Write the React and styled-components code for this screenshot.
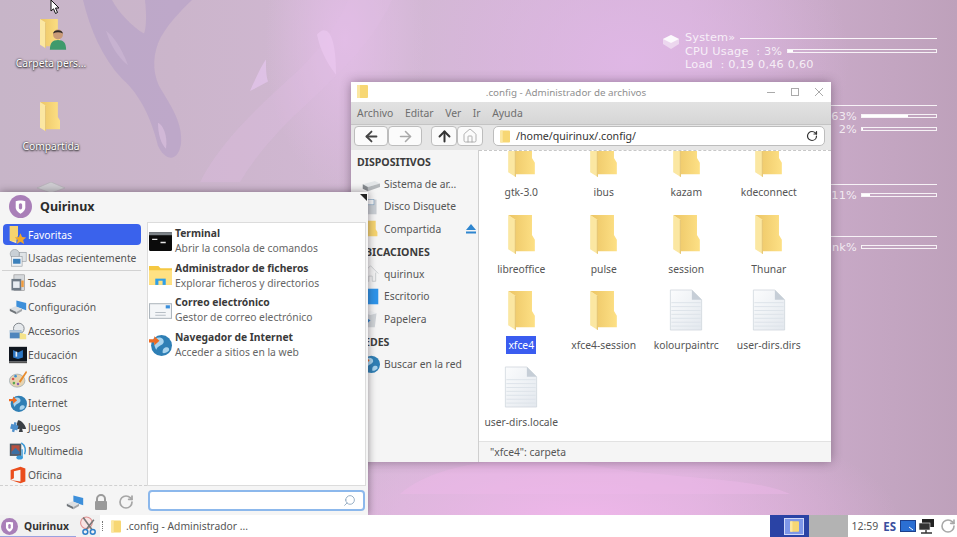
import * as React from "react";
import styled, { createGlobalStyle } from "styled-components";
import { ArrowLeft, ArrowRight, ArrowUp, Home, RotateCw, Search } from "lucide-react";

const GlobalStyle = createGlobalStyle`
  html, body { margin: 0; padding: 0; height: 100%; overflow: hidden; }
  body { font-family: "Noto Sans", "Open Sans", sans-serif; }
  * { box-sizing: border-box; }
  svg { flex: none; }
`;

const categories = [
  { name: "Todas", icon: "all" },
  { name: "Configuración", icon: "settings" },
  { name: "Accesorios", icon: "tools" },
  { name: "Educación", icon: "edu" },
  { name: "Gráficos", icon: "paint" },
  { name: "Internet", icon: "globe" },
  { name: "Juegos", icon: "games" },
  { name: "Multimedia", icon: "media" },
  { name: "Oficina", icon: "office" },
];

const favourites = [
  { title: "Terminal", sub: "Abrir la consola de comandos", icon: "term" },
  { title: "Administrador de ficheros", sub: "Explorar ficheros y directorios", icon: "files" },
  { title: "Correo electrónico", sub: "Gestor de correo electrónico", icon: "mail" },
  { title: "Navegador de Internet", sub: "Acceder a sitios en la web", icon: "globe" },
];

const files = [
  { name: "gtk-3.0" }, { name: "ibus" }, { name: "kazam" }, { name: "kdeconnect" },
  { name: "libreoffice" }, { name: "pulse" }, { name: "session" }, { name: "Thunar" },
  { name: "xfce4", selected: true }, { name: "xfce4-session" },
  { name: "kolourpaintrc", doc: true }, { name: "user-dirs.dirs", doc: true },
  { name: "user-dirs.locale", doc: true },
];

const places = [
  { head: "DISPOSITIVOS" },
  { name: "Sistema de ar...", icon: "drive" },
  { name: "Disco Disquete", icon: "floppy" },
  { name: "Compartida", icon: "folder", eject: true },
  { head: "UBICACIONES" },
  { name: "quirinux", icon: "home" },
  { name: "Escritorio", icon: "desk" },
  { name: "Papelera", icon: "trash" },
  { head: "REDES" },
  { name: "Buscar en la red", icon: "globe" },
];

function FolderIcon({ w = 27, h = 40 }) {
  return (
    <svg width={w} height={h} viewBox="0 0 28 42">
      <path d="M0 0H25V21L28 26V38H8V6Z" fill="url(#folderBack)" />
      <path d="M0 0L8 5V41L0 36Z" fill="#fbe7a2" />
      <path d="M8 5V41L7 40.4V5Z" fill="#e2bf68" />
    </svg>
  );
}

function FlatFolder({ w = 11, h = 13 }) {
  return (
    <svg width={w} height={h} viewBox="0 0 11 13">
      <path d="M0 1A1 1 0 0 1 1 0H10A1 1 0 0 1 11 1V12A1 1 0 0 1 10 13H1A1 1 0 0 1 0 12Z" fill="#f7d774" />
      <path d="M0 1A1 1 0 0 1 1 0H3V13H1A1 1 0 0 1 0 12Z" fill="#fbe7a2" />
    </svg>
  );
}

function DocIcon() {
  return (
    <svg width="34" height="42" viewBox="0 0 34 43">
      <path d="M1 1H23L33 11V42H1Z" fill="url(#docFill)" stroke="#cfd6dd" strokeWidth=".8" />
      {[14, 18, 22, 26, 30, 34, 38].map((y) => (
        <path key={y} d="M2 0H32" transform={`translate(0 ${y})`} stroke="#dde3ea" strokeWidth="1" />
      ))}
      <path d="M23 1V11H33Z" fill="#c6ced7" />
    </svg>
  );
}

function LogoMark({ size = 23 }) {
  return (
    <svg width={size} height={size} viewBox="0 0 24 24">
      <circle cx="12" cy="12" r="12" fill="#a97fb8" />
      <path d="M7 6.5C9 5.5 15 5.5 17 6.5V13C17 16 14 18.5 12 19.5C10 18.5 7 16 7 13Z" fill="#fff" />
      <rect x="10.3" y="8.5" width="3.4" height="6.5" rx="1.7" fill="#a97fb8" />
    </svg>
  );
}

// small app icons, all drawn on a 22 unit square
function AppIcon({ name, size = 20 }) {
  const shapes = {
    term: (
      <>
        <rect x="0" y="2" width="22" height="18" rx="1" fill="#0b0b0b" />
        <rect x="0" y="2" width="22" height="3" fill="#7d8388" />
        <path d="M3 9H8M11 12H16" stroke="#e8e8e8" strokeWidth="1.3" />
      </>
    ),
    files: (
      <>
        <path d="M0 2H9L11 4H22V20H0Z" fill="#f5c842" />
        <rect x="0" y="6" width="22" height="14" fill="#ffe183" />
        <path d="M6 14H16V20H6Z" fill="#2f9fe8" />
        <path d="M9 16H13V20H9Z" fill="#ffe183" />
      </>
    ),
    mail: (
      <>
        <rect x="0.5" y="4.5" width="21" height="14" fill="#f4f6f8" stroke="#aeb6bd" />
        <rect x="16" y="6" width="4" height="3" fill="#3a8fdc" />
        <path d="M6 13H16M6 15.5H16" stroke="#b7bec5" />
      </>
    ),
    globe: (
      <>
        <circle cx="12" cy="12" r="10" fill="#2f7fb5" />
        <path d="M6 5C10 3 15 5 14 9C13 12 8 12 7 16C5 13 4 8 6 5ZM15 14C18 13 20 14 19 17C17 19 14 20 13 19C13 17 13 15 15 14Z" fill="#a9d4ee" />
        <path d="M0 6H5V3L10 7.500L5 12V9H0Z" fill="#ee6b22" />
      </>
    ),
    all: (
      <>
        <rect x="6" y="1" width="13" height="19" fill="#d6d9dc" stroke="#888" strokeWidth=".7" />
        <rect x="3" y="6" width="12" height="14" fill="#6e7a86" />
        <rect x="5" y="9" width="8" height="8" fill="#e8edf2" />
        <rect x="15" y="8" width="3" height="8" fill="#ef9b3d" />
      </>
    ),
    settings: (
      <>
        <path d="M9 3L21 6V15L9 11Z" fill="#3d8fda" />
        <path d="M1 13L8 10L16 13L9 17Z" fill="#dcdfe2" />
        <path d="M1 13L9 17V20L1 16Z" fill="#6f7479" />
        <path d="M9 17L16 13V16L9 20Z" fill="#a2a6aa" />
      </>
    ),
    tools: (
      <>
        <circle cx="12" cy="8" r="6.500" fill="#e6e9ec" stroke="#80868c" strokeWidth="1.200" />
        <rect x="1" y="10" width="14" height="10" fill="#4f86bd" />
        <rect x="1" y="10" width="14" height="3" fill="#b5c7d8" />
        <path d="M13 13L21 15V21H13Z" fill="#f5e38a" />
      </>
    ),
    edu: (
      <>
        <rect x="0" y="1" width="22" height="18" fill="#10161f" />
        <path d="M5 5L11 8L17 5V14L11 16L5 14Z" fill="#2e77c4" />
        <path d="M8 7H10V13H8Z" fill="#e9eef4" />
        <rect x="0" y="19" width="22" height="2" fill="#555" />
      </>
    ),
    paint: (
      <>
        <ellipse cx="10" cy="13" rx="9.500" ry="8" fill="#e6d3b0" stroke="#93a4b0" strokeWidth=".8" />
        <circle cx="5" cy="11" r="1.600" fill="#d9534f" />
        <circle cx="8" cy="7.500" r="1.600" fill="#3f8fd2" />
        <circle cx="6" cy="16" r="1.600" fill="#5ba74e" />
        <circle cx="11" cy="17" r="1.500" fill="#8b5fb0" />
        <path d="M21 1L12 14L14 15.500L22 3Z" fill="#e88a2b" />
      </>
    ),
    games: (
      <>
        <path d="M11 3C14 2 19 7 21 13C18 14 17 13 16 13L17 17H12L13 13C12 13 10 14 9 13C9 10 10 5 11 3Z" fill="#3a3f45" />
        <path d="M2 8H5V5H8V8H11V14H8V17H5V14H2Z" fill="#4e8fcb" transform="rotate(15 6 11)" />
      </>
    ),
    media: (
      <>
        <rect x="1" y="2" width="14" height="15" fill="#4a5964" />
        <rect x="3" y="4" width="10" height="11" fill="#b6503f" />
        <path d="M3 12L8 7L13 12V15H3Z" fill="#3c6fa2" />
        <path d="M15 1C20 4 21 10 19 15" fill="none" stroke="#3a9ad9" strokeWidth="1.800" />
        <ellipse cx="13" cy="19" rx="4" ry="2.500" fill="#3a9ad9" />
        <path d="M16 19V9" stroke="#3a9ad9" strokeWidth="1.600" />
      </>
    ),
    office: <path d="M2 5L14 1L20 3V19L14 21L2 17L14 19V4.500L6 6.500V15L2 17Z" fill="#ea4d1c" />,
    usage: (
      <>
        <circle cx="7" cy="6" r="5.500" fill="#c9d0d6" stroke="#8c9399" strokeWidth=".7" />
        <rect x="13" y="4" width="8" height="11" fill="#dfe3e6" stroke="#8c9399" strokeWidth=".7" />
        <rect x="3" y="9" width="13" height="12" fill="#eef1f4" stroke="#8c9399" strokeWidth=".7" />
        <rect x="5" y="12" width="9" height="6" fill="#3b80bb" />
      </>
    ),
    star: (
      <>
        <path d="M1 0L9 3V21L1 18Z" fill="#ffe9a8" />
        <path d="M1 0H11V12L8 19L1 18Z" fill="#f6d36f" />
        <path d="M14 9L16 13.500L21 14L17.300 17L18.500 22L14 19.400L9.500 22L10.700 17L7 14L12 13.500Z" fill="#f0a72a" />
      </>
    ),
    drive: (
      <>
        <path d="M2 12L16 8L22 11L8 15Z" fill="#e3e6e8" />
        <path d="M2 12L8 15V20L2 17Z" fill="#858a8e" />
        <path d="M8 15L22 11V15L8 20Z" fill="#b4b8bb" />
      </>
    ),
    floppy: (
      <>
        <rect x="2" y="3" width="16" height="17" fill="#c8cdd2" />
        <rect x="5" y="3" width="10" height="6" fill="#f2f4f6" stroke="#7da0bf" strokeWidth=".7" />
      </>
    ),
    folder: <path d="M4 2H17V12L19 15V20H8V5Z" fill="#f5d36f" />,
    home: <path d="M2 11L11 2L20 11M5 10V20H9V14H13V20H17V10" fill="#f2f2f2" stroke="#c5c8cb" strokeWidth="1" />,
    desk: <rect x="2" y="2" width="18" height="18" fill="#2d93e8" />,
    trash: (
      <>
        <path d="M4 5H18L16 21H6Z" fill="#cfd3d7" />
        <path d="M4 5L11 2L18 5L11 7Z" fill="#eef0f2" />
        <path d="M7 11L11 13L8 16Z" fill="#2f7fc8" />
      </>
    ),
  };
  return (
    <svg width={size} height={size} viewBox="0 0 22 22">
      {shapes[name]}
    </svg>
  );
}

function Wallpaper() {
  return (
    <WallpaperArt viewBox="0 0 957 537" preserveAspectRatio="none">
      <path d="M83 0C90 30 102 60 122 82C140 98 152 125 158 152C165 168 178 170 181 150C183 130 172 112 162 95C153 80 152 62 158 45C165 28 180 12 192 0H145C147 18 146 30 144 35C132 28 118 12 112 0Z" fill="#ab97c6" opacity=".42" />
      <path d="M106 32C112 36 122 50 128 68C118 60 110 46 106 32Z" fill="#c9b4d2" opacity=".8" />
      <path d="M158 128C163 130 168 142 166 155C161 150 158 140 158 128Z" fill="#d6bcdb" opacity=".8" />
      <path d="M200 190C222 145 262 108 300 72C322 48 338 25 348 0H392C368 55 322 92 285 130C262 155 248 175 240 190Z" fill="#e2c0e6" opacity=".28" />
      <path d="M250 95C258 76 262 68 266 62C266 72 266 78 268 85Z" fill="#e6c6ee" opacity=".7" />
      <path d="M317 36C325 26 336 30 336 78C327 66 320 52 317 36Z" fill="#eccaf1" opacity=".6" />
      <path d="M400 515C440 480 520 470 620 490C700 500 760 500 790 515Z" fill="#efb9ec" opacity=".4" />
    </WallpaperArt>
  );
}

export default function App() {
  return (
    <>
      <GlobalStyle />
      <Screen>
        <svg width="0" height="0" style={{ position: "absolute" }}>
          <defs>
            <linearGradient id="folderBack" x1="0" x2="1" y1="0" y2="0">
              <stop offset="0" stopColor="#ecc565" />
              <stop offset="1" stopColor="#fde085" />
            </linearGradient>
            <linearGradient id="docFill" x1="0" x2="1" y1="0" y2="1">
              <stop offset="0" stopColor="#fbfcfd" />
              <stop offset="1" stopColor="#e3e8ee" />
            </linearGradient>
          </defs>
        </svg>

        <Desktop>
          <Wallpaper />

          <Cursor viewBox="0 0 11 15" width="11" height="15">
            <path d="M1 0V11L3.500 8.800L5.500 13.500L7.500 12.500L5.500 8H9Z" fill="#fff" stroke="#111" strokeWidth="1" />
          </Cursor>

          <DesktopIcons>
            <DesktopIcon>
              <IconSlot>
                <FolderIcon w={20} h={30} />
                <Person viewBox="0 0 20 24" width="18" height="24">
                  <path d="M1 24C1 16 4 13 10 13C16 13 19 16 19 24Z" fill="#3f9a6c" />
                  <circle cx="10" cy="7" r="5.500" fill="#c99a78" />
                  <path d="M4.500 6C5 1 15 1 15.500 6C12 4 8 4 4.500 6Z" fill="#2f2a28" />
                </Person>
              </IconSlot>
              <DesktopLabel>Carpeta pers...</DesktopLabel>
            </DesktopIcon>
            <DesktopIcon>
              <IconSlot>
                <FolderIcon w={20} h={30} />
              </IconSlot>
              <DesktopLabel>Compartida</DesktopLabel>
            </DesktopIcon>
            <DesktopIcon>
              <svg width="28" height="12" viewBox="0 0 28 12">
                <path d="M0 6L14 0L28 6L14 11Z" fill="#cfcdd2" stroke="#b3b0b6" strokeWidth=".7" />
              </svg>
            </DesktopIcon>
          </DesktopIcons>

          <Conky>
            <ConkyIcon viewBox="0 0 16 14" width="16" height="14">
              <path d="M8 0L16 4V9L8 14L0 9V4Z" fill="#fff" opacity=".45" />
              <path d="M8 0L16 4L8 8L0 4Z" fill="#fff" opacity=".85" />
            </ConkyIcon>
            <ConkyColumn>
              <ConkyRow>
                <ConkyText>System»</ConkyText>
                <ConkyLine />
              </ConkyRow>
              <ConkyRow>
                <ConkyText>CPU Usage&nbsp; : 3%</ConkyText>
                <ConkyBar><ConkyFill style={{ width: "3%" }} /></ConkyBar>
              </ConkyRow>
              <ConkyRow>
                <ConkyText>Load&nbsp; : 0,19 0,46 0,60</ConkyText>
              </ConkyRow>
            </ConkyColumn>
          </Conky>

          <ConkySide>
            <SideLine $top={105} />
            <SideStat $top={109}><ConkyText>63%</ConkyText><SideBar><ConkyFill style={{ width: "62%" }} /></SideBar></SideStat>
            <SideStat $top={122}><ConkyText>2%</ConkyText><SideBar><ConkyFill style={{ width: "2%" }} /></SideBar></SideStat>
            <SideLine $top={184} />
            <SideStat $top={188}><ConkyText>11%</ConkyText><SideBar><ConkyFill style={{ width: "11%" }} /></SideBar></SideStat>
            <SideLine $top={236} />
            <SideStat $top={240}><ConkyText>nk%</ConkyText><SideBar /></SideStat>
          </ConkySide>

          <Window>
            <TitleBar>
              <TitleFolder><FlatFolder w={11} h={13} /></TitleFolder>
              <TitleText>.config - Administrador de archivos</TitleText>
              <WindowControls>
                <svg width="10" height="10" viewBox="0 0 10 10"><path d="M1 5.500H9" stroke="#aaa" /></svg>
                <svg width="10" height="10" viewBox="0 0 10 10"><rect x="1.500" y="1.500" width="7" height="7" fill="none" stroke="#aaa" /></svg>
                <svg width="10" height="10" viewBox="0 0 10 10"><path d="M1 1L9 9M9 1L1 9" stroke="#aaa" /></svg>
              </WindowControls>
            </TitleBar>
            <MenuStrip>
              {["Archivo", "Editar", "Ver", "Ir", "Ayuda"].map((m) => <span key={m}>{m}</span>)}
            </MenuStrip>
            <ToolStrip>
              <ButtonGroup>
                <NavButton><ArrowLeft size={17} strokeWidth={2.6} color="#444" /></NavButton>
                <NavButton><ArrowRight size={17} strokeWidth={2.2} color="#a8a8a8" /></NavButton>
              </ButtonGroup>
              <ButtonGroup>
                <NavButton $narrow><ArrowUp size={17} strokeWidth={2.8} color="#333" /></NavButton>
                <NavButton $narrow><Home size={16} strokeWidth={1.2} color="#a0a0a0" /></NavButton>
              </ButtonGroup>
              <AddressBar>
                <FlatFolder w={10} h={13} />
                <AddressText>/home/quirinux/.config/</AddressText>
                <RotateCw size={12} strokeWidth={2.4} color="#333" />
              </AddressBar>
            </ToolStrip>
            <WindowBody>
              <Sidebar>
                {places.map((p) =>
                  p.head ? (
                    <PlaceHead key={p.head}>{p.head}</PlaceHead>
                  ) : (
                    <PlaceRow key={p.name}>
                      <AppIcon name={p.icon} size={19} />
                      <span>{p.name}</span>
                      {p.eject && (
                        <Eject viewBox="0 0 10 10" width="10" height="10">
                          <path d="M5 0L10 6H0ZM0 7.500H10V9.500H0Z" fill="#2f86cf" />
                        </Eject>
                      )}
                    </PlaceRow>
                  )
                )}
              </Sidebar>
              <MainPane>
                <FileScroller>
                  <FileGrid>
                    {files.map((f) => (
                      <FileCell key={f.name}>
                        <FileIconSlot>{f.doc ? <DocIcon /> : <FolderIcon />}</FileIconSlot>
                        <FileName $selected={f.selected}>{f.name}</FileName>
                      </FileCell>
                    ))}
                  </FileGrid>
                </FileScroller>
                <StatusBar>"xfce4": carpeta</StatusBar>
              </MainPane>
            </WindowBody>
          </Window>

          <AppMenu>
            <MenuHeader>
              <LogoMark />
              <MenuUser>Quirinux</MenuUser>
              <CornerMark />
            </MenuHeader>
            <MenuMiddle>
              <CategoryColumn>
                <CategoryRow $active>
                  <AppIcon name="star" size={18} />
                  <span>Favoritas</span>
                </CategoryRow>
                <CategoryRow>
                  <AppIcon name="usage" size={18} />
                  <span>Usadas recientemente</span>
                </CategoryRow>
                <CategoryDivider />
                {categories.map((c) => (
                  <CategoryRow key={c.name}>
                    <AppIcon name={c.icon} size={18} />
                    <span>{c.name}</span>
                  </CategoryRow>
                ))}
              </CategoryColumn>
              <AppPanel>
                {favourites.map((a) => (
                  <AppRow key={a.title}>
                    <AppIcon name={a.icon} size={23} />
                    <AppInfo>
                      <AppTitle>{a.title}</AppTitle>
                      <AppSub>{a.sub}</AppSub>
                    </AppInfo>
                  </AppRow>
                ))}
              </AppPanel>
            </MenuMiddle>
            <MenuFooter>
              <FooterIcons>
                <AppIcon name="settings" size={18} />
                <svg width="14" height="16" viewBox="0 0 14 16">
                  <path d="M3 7V5A4 4 0 0 1 11 5V7" fill="none" stroke="#9a9a9a" strokeWidth="2" />
                  <rect x="1" y="7" width="12" height="9" rx="1" fill="#9a9a9a" />
                </svg>
                <RotateCw size={16} strokeWidth={2.6} color="#a6a6a6" />
              </FooterIcons>
              <SearchBox>
                <SearchGlyph><Search size={13} strokeWidth={1.6} color="#8aa4bc" /></SearchGlyph>
              </SearchBox>
            </MenuFooter>
          </AppMenu>
        </Desktop>

        <Taskbar>
          <StartButton>
            <LogoMark size={17} />
            <span>Quirinux</span>
          </StartButton>
          <Launcher>
            <svg width="18" height="20" viewBox="0 0 17 18">
              <circle cx="7" cy="6" r="5.500" fill="#f8e4e4" stroke="#e09090" />
              <path d="M4 1L12 12M14 3L7 12" stroke="#777" strokeWidth="1.500" />
              <circle cx="6" cy="14.500" r="2.300" fill="none" stroke="#2f7fc8" strokeWidth="1.400" />
              <circle cx="13" cy="14.500" r="2.300" fill="none" stroke="#2f7fc8" strokeWidth="1.400" />
            </svg>
          </Launcher>
          <Grip />
          <TaskButton>
            <FlatFolder w={10} h={13} />
            <span>.config - Administrador ...</span>
          </TaskButton>
          <Tray>
            <Pager>
              <PagerActive><PagerWindow><FlatFolder w={9} h={11} /></PagerWindow></PagerActive>
              <PagerIdle />
            </Pager>
            <Clock>12:59</Clock>
            <Lang>ES</Lang>
            <TrayIcons>
              <svg width="16" height="12" viewBox="0 0 16 12">
                <rect x=".5" y=".5" width="15" height="11" fill="#2b6fd3" stroke="#1d3f8a" />
                <path d="M9 7L13 10" stroke="#fff" />
              </svg>
              <svg width="17" height="16" viewBox="0 0 17 16">
                <rect x="4" y="1" width="12" height="8" fill="#222" />
                <rect x="1" y="5" width="11" height="7" fill="#333" stroke="#eee" strokeWidth=".6" />
                <path d="M3 15H14M8 12V15" stroke="#333" strokeWidth="1.400" />
              </svg>
              <TrayReload><RotateCw size={16} strokeWidth={2.4} color="#a8a8a8" /></TrayReload>
            </TrayIcons>
          </Tray>
        </Taskbar>
      </Screen>
    </>
  );
}

const Screen = styled.div`
  width: 957px;
  height: 537px;
  display: flex;
  flex-direction: column;
  overflow: hidden;
`;

const Desktop = styled.main`
  position: relative;
  flex: 1;
  overflow: hidden;
  background:
    radial-gradient(ellipse 320px 110px at 580px 520px, #efb6ea 0%, rgba(239, 182, 234, 0) 100%),
    radial-gradient(ellipse 220px 170px at 630px 60px, #dfb7e5 0%, rgba(223, 183, 229, 0) 100%),
    radial-gradient(ellipse 80px 150px at 345px 40px, #e2bde6 0%, rgba(226, 189, 230, 0) 100%),
    linear-gradient(90deg, #c7b5c8 0%, #cbb5cb 18%, #d3b8d5 42%, #d3b2d4 72%, #bea1bb 100%);
`;

const WallpaperArt = styled.svg`
  position: absolute;
  inset: 0;
  width: 100%;
  height: 100%;
`;

const Cursor = styled.svg`
  position: absolute;
  left: 50px;
  top: 0;
`;

const DesktopIcons = styled.div`
  position: absolute;
  left: 14px;
  top: 16px;
  width: 74px;
  display: flex;
  flex-direction: column;
  align-items: center;
  gap: 27px;
`;

const DesktopIcon = styled.div`
  display: flex;
  flex-direction: column;
  align-items: center;
  gap: 7px;
  height: 56px;
`;

const IconSlot = styled.div`
  position: relative;
  width: 20px;
  height: 33px;
  margin-left: -2px;
  padding-top: 3px;
`;

const Person = styled.svg`
  position: absolute;
  left: 9px;
  top: 11px;
`;

const DesktopLabel = styled.div`
  font-size: 10.300px;
  line-height: 14px;
  color: #fff;
  white-space: nowrap;
  text-shadow: 0 1px 2px #222, 0 0 2px #333;
`;

const Conky = styled.div`
  position: absolute;
  left: 663px;
  top: 31px;
  width: 274px;
  display: flex;
  gap: 6px;
  color: rgba(255, 255, 255, 0.8);
`;

const ConkyIcon = styled.svg`
  flex: none;
  margin-top: 4px;
`;

const ConkyColumn = styled.div`
  flex: 1;
  display: flex;
  flex-direction: column;
`;

const ConkyRow = styled.div`
  display: flex;
  align-items: center;
  gap: 5px;
  height: 13.500px;
`;

const ConkyText = styled.span`
  font: 11.300px/13px "DejaVu Sans", sans-serif;
  letter-spacing: 0.2px;
  color: rgba(255, 255, 255, 0.8);
  white-space: nowrap;
`;

const ConkyLine = styled.div`
  flex: 1;
  height: 1px;
  margin-top: 2px;
  background: rgba(255, 255, 255, 0.9);
`;

const ConkyBar = styled.div`
  flex: 1;
  height: 4px;
  border: 1px solid rgba(255, 255, 255, 0.85);
  overflow: hidden;
`;

const ConkyFill = styled.div`
  height: 100%;
  background: #fff;
`;

const ConkySide = styled.div`
  position: absolute;
  left: 831px;
  top: 0;
  width: 106px;
`;

const SideLine = styled.div`
  position: absolute;
  top: ${(p) => p.$top}px;
  left: 0;
  right: 0;
  height: 1px;
  background: rgba(255, 255, 255, 0.85);
`;

const SideStat = styled.div`
  position: absolute;
  top: ${(p) => p.$top}px;
  left: 0;
  right: 0;
  height: 14px;
  display: flex;
  align-items: center;
  justify-content: flex-end;
  gap: 4px;
`;

const SideBar = styled(ConkyBar)`
  flex: none;
  width: 76px;
`;

const Window = styled.section`
  position: absolute;
  left: 351px;
  top: 82px;
  width: 480px;
  height: 380px;
  display: flex;
  flex-direction: column;
  background: #f5f5f5;
  box-shadow: 0 0 10px rgba(60, 40, 60, 0.45);
`;

const TitleBar = styled.header`
  position: relative;
  height: 20px;
  flex: none;
  display: flex;
  align-items: center;
  justify-content: center;
  padding-right: 50px;
  background: #fff;
`;

const TitleFolder = styled.div`
  position: absolute;
  left: 6px;
  top: 3px;
  display: flex;
`;

const TitleText = styled.div`
  font-size: 9.800px;
  color: #8f8f8f;
`;

const WindowControls = styled.div`
  position: absolute;
  right: 7px;
  top: 5px;
  display: flex;
  gap: 14px;
`;

const MenuStrip = styled.nav`
  height: 23px;
  flex: none;
  display: flex;
  align-items: center;
  gap: 11.500px;
  padding: 0 0 1px 6px;
  font-size: 10.400px;
  color: #6e6e6e;
  background: linear-gradient(#e2e2e2, #d6d6d6);
  border-bottom: 1px solid #c4c4c4;
`;

const ToolStrip = styled.div`
  height: 25px;
  flex: none;
  display: flex;
  align-items: center;
  gap: 9px;
  padding: 0 6px 3px 3px;
  background: #e6e6e6;
`;

const ButtonGroup = styled.div`
  display: flex;
  gap: 0;
`;

const NavButton = styled.button`
  width: ${(p) => (p.$narrow ? 26 : 34)}px;
  height: 20px;
  padding: 0;
  display: flex;
  align-items: center;
  justify-content: center;
  background: #fbfbfb;
  border: 1px solid #bdbdbd;
  border-radius: 4px;
`;

const AddressBar = styled.div`
  flex: 1;
  height: 20px;
  margin-left: 1px;
  display: flex;
  align-items: center;
  gap: 6px;
  padding: 0 6px;
  background: #fff;
  border: 1px solid #bdbdbd;
  border-radius: 5px;
`;

const AddressText = styled.span`
  flex: 1;
  font-size: 10.600px;
  color: #333;
`;

const WindowBody = styled.div`
  flex: 1;
  min-height: 0;
  display: flex;
`;

const Sidebar = styled.aside`
  width: 128px;
  flex: none;
  display: flex;
  flex-direction: column;
  background: #f5f5f5;
  border-right: 1px solid #cfcfcf;
`;

const PlaceHead = styled.div`
  height: 22.500px;
  padding-left: 6px;
  font-size: 10.600px;
  font-weight: 700;
  line-height: 25px;
  color: #3c3c3c;
`;

const PlaceRow = styled.div`
  position: relative;
  height: 22.500px;
  display: flex;
  align-items: center;
  gap: 4px;
  padding-left: 10px;
  font-size: 10.300px;
  color: #555;
`;

const Eject = styled.svg`
  position: absolute;
  right: 2px;
  top: 6px;
`;

const MainPane = styled.div`
  flex: 1;
  min-width: 0;
  display: flex;
  flex-direction: column;
  background: #fff;
`;

const FileScroller = styled.div`
  flex: 1;
  min-height: 0;
  overflow: hidden;
  border-top: 1px dashed #c8c8c8;
`;

const FileGrid = styled.div`
  display: grid;
  grid-template-columns: repeat(4, 82.500px);
  grid-auto-rows: 76.700px;
  margin: -22px 0 0 1px;
`;

const FileCell = styled.div`
  display: flex;
  flex-direction: column;
  align-items: center;
`;

const FileIconSlot = styled.div`
  height: 50px;
  display: flex;
  align-items: flex-end;
  padding-bottom: 1px;
`;

const FileName = styled.div`
  margin-top: 4px;
  padding: 0 2px;
  font-size: 10.300px;
  line-height: 18px;
  white-space: nowrap;
  color: ${(p) => (p.$selected ? "#fff" : "#555")};
  background: ${(p) => (p.$selected ? "#3a5cf0" : "transparent")};
`;

const StatusBar = styled.footer`
  height: 21px;
  flex: none;
  padding-left: 11px;
  font-size: 10.300px;
  line-height: 21px;
  color: #555;
  background: #f5f5f5;
  border-top: 1px solid #e2e2e2;
`;

const AppMenu = styled.section`
  position: absolute;
  left: 0;
  top: 192px;
  width: 368px;
  height: 323px;
  display: flex;
  flex-direction: column;
  background: #f5f5f5;
  box-shadow: 0 0 8px rgba(40, 30, 40, 0.5);
`;

const MenuHeader = styled.header`
  position: relative;
  height: 30px;
  flex: none;
  display: flex;
  align-items: center;
  gap: 8px;
  padding: 0 0 2px 9px;
`;

const MenuUser = styled.div`
  font-size: 12.500px;
  font-weight: 700;
  color: #2c2c2c;
`;

const CornerMark = styled.div`
  position: absolute;
  right: 1px;
  top: 2px;
  width: 0;
  height: 0;
  border-top: 7px solid #222;
  border-left: 7px solid transparent;
`;

const MenuMiddle = styled.div`
  height: 264px;
  flex: none;
  display: flex;
  padding-right: 2px;
`;

const CategoryColumn = styled.div`
  width: 147px;
  flex: none;
  padding: 2px 6px 0 2px;
  overflow: hidden;
  border-bottom: 1px dashed #d0d0d0;
`;

const CategoryRow = styled.div`
  height: ${(p) => (p.$active ? 21 : 24)}px;
  margin-bottom: ${(p) => (p.$active ? 1 : 0)}px;
  padding: 0 0 0 6px;
  margin-left: 1px;
  display: flex;
  align-items: center;
  gap: 1px;
  font-size: 10.300px;
  white-space: nowrap;
  color: ${(p) => (p.$active ? "#fff" : "#555")};
  background: ${(p) => (p.$active ? "#3a62ec" : "transparent")};
  border-radius: 4px;
`;

const CategoryDivider = styled.div`
  height: 1px;
  background: #d2d2d2;
`;

const AppPanel = styled.div`
  flex: 1;
  padding-top: 1px;
  background: #fff;
  border: 1px solid #dcdcdc;
`;

const AppRow = styled.div`
  height: 34.500px;
  display: flex;
  align-items: center;
  gap: 3px;
  padding-left: 1px;
`;

const AppInfo = styled.div`
  display: flex;
  flex-direction: column;
`;

const AppTitle = styled.div`
  font-size: 10.300px;
  line-height: 15px;
  font-weight: 700;
  color: #3a3a3a;
`;

const AppSub = styled.div`
  font-size: 10.300px;
  line-height: 15px;
  color: #666;
`;

const MenuFooter = styled.footer`
  flex: 1;
  display: flex;
  align-items: center;
  padding: 0 3px 0 148px;
  position: relative;
`;

const FooterIcons = styled.div`
  position: absolute;
  left: 66px;
  top: 7px;
  display: flex;
  align-items: center;
  gap: 10px;
`;

const SearchBox = styled.div`
  flex: 1;
  height: 21px;
  display: flex;
  align-items: center;
  justify-content: flex-end;
  padding-right: 7px;
  background: #fff;
  border: 2px solid #8cb8ec;
  border-radius: 4px;
`;

const SearchGlyph = styled.span`
  display: flex;
  transform: scaleX(-1);
`;

const Taskbar = styled.footer`
  height: 22px;
  flex: none;
  display: flex;
  align-items: center;
  background: #fff;
`;

const StartButton = styled.div`
  height: 22px;
  width: 76px;
  flex: none;
  display: flex;
  align-items: center;
  gap: 6px;
  padding-left: 1px;
  font-size: 10.300px;
  font-weight: 700;
  color: #333;
  background: #f1f1f1;
  box-shadow: inset 0 -1px 0 #9aa2e0;
`;

const Launcher = styled.div`
  width: 24px;
  height: 22px;
  flex: none;
  display: flex;
  align-items: center;
  justify-content: center;
  background: #f1f1f1;
`;

const Grip = styled.div`
  width: 1px;
  height: 10px;
  margin: 0 8px 0 2px;
  border-left: 1px dotted #777;
`;

const TaskButton = styled.div`
  display: flex;
  align-items: center;
  gap: 5px;
  font-size: 10.300px;
  color: #555;
`;

const Tray = styled.div`
  margin-left: auto;
  display: flex;
  align-items: center;
  height: 22px;
`;

const Pager = styled.div`
  display: flex;
  height: 22px;
`;

const PagerActive = styled.div`
  width: 39px;
  display: flex;
  align-items: center;
  justify-content: flex-end;
  padding-right: 5px;
  background: #2a43a5;
`;

const PagerWindow = styled.div`
  width: 20px;
  height: 17px;
  display: flex;
  align-items: center;
  justify-content: center;
  background: #7e97e8;
  border: 1px solid #cfd8f8;
`;

const PagerIdle = styled.div`
  width: 39px;
  background: #b3b3b3;
`;

const Clock = styled.span`
  margin-left: 3px;
  font-size: 10.500px;
  color: #555;
`;

const Lang = styled.span`
  margin-left: 5px;
  font-size: 11.500px;
  font-weight: 700;
  color: #3a4f9e;
`;

const TrayIcons = styled.div`
  display: flex;
  align-items: center;
  gap: 2px;
  margin-left: 4px;
  padding-right: 1px;
`;

const TrayReload = styled.span`
  display: flex;
  margin-left: 3px;
`;
